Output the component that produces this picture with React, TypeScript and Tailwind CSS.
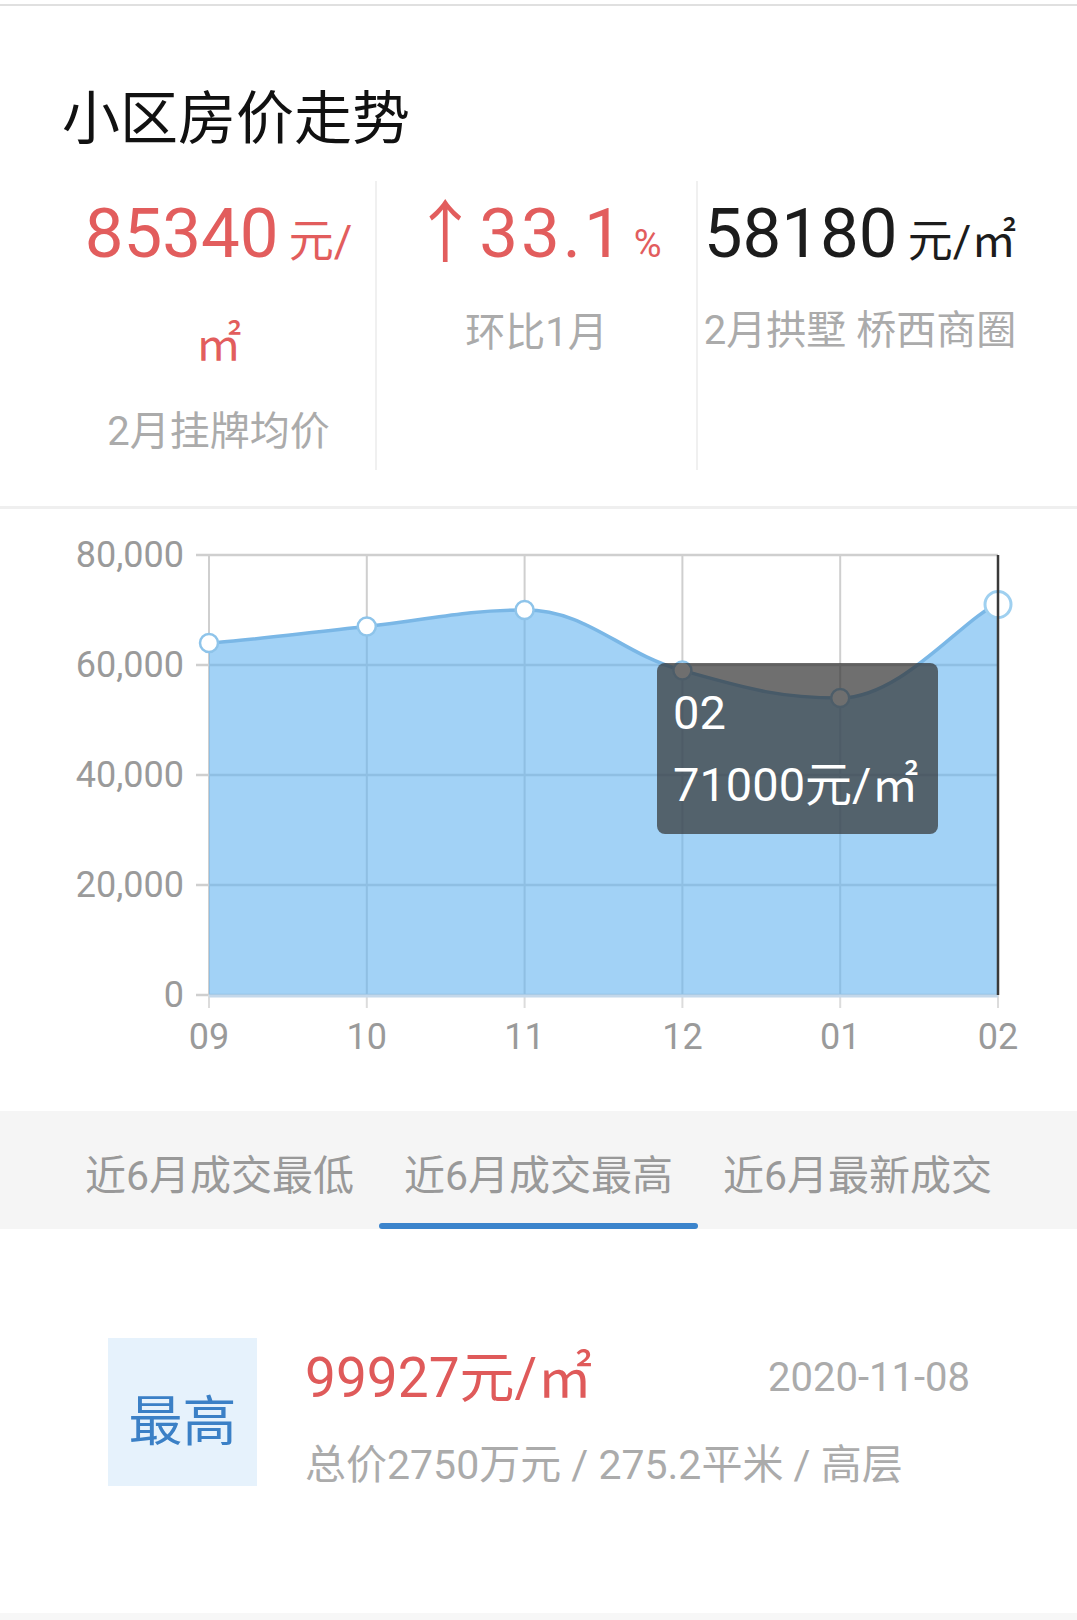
import React from "react";

type Pt = { x: number; y: number };

const X0 = 209;
const X1 = 998;
const YT = 555;
const YB = 995;
const months = ["09", "10", "11", "12", "01", "02"];
const values = [64000, 67000, 70000, 59000, 54000, 71000];
const yTicks = [80000, 60000, 40000, 20000, 0];

const xAt = (i: number) => X0 + ((X1 - X0) / 5) * i;
const yAt = (v: number) => YB - (v * (YB - YT)) / 80000;

function smoothPath(pts: Pt[], t = 0.2): string {
  let d = `M ${pts[0].x} ${pts[0].y}`;
  const tangent = (i: number): Pt => {
    const prev = pts[Math.max(0, i - 1)];
    const next = pts[Math.min(pts.length - 1, i + 1)];
    const cur = pts[i];
    let dy = (next.y - prev.y) * t;
    if ((cur.y - prev.y) * (cur.y - next.y) > 0) dy = 0;
    if (i === 0 || i === pts.length - 1) dy = 0.5 * dy;
    return { x: (next.x - prev.x) * t, y: dy };
  };
  for (let i = 0; i < pts.length - 1; i++) {
    const a = pts[i];
    const b = pts[i + 1];
    const ta = tangent(i);
    const tb = tangent(i + 1);
    d += ` C ${a.x + ta.x} ${a.y + ta.y} ${b.x - tb.x} ${b.y - tb.y} ${b.x} ${b.y}`;
  }
  return d;
}

function Chart() {
  const pts: Pt[] = values.map((v, i) => ({ x: xAt(i), y: yAt(v) }));
  const line = smoothPath(pts);
  const area = `${line} L ${X1} ${YB} L ${X0} ${YB} Z`;
  return (
    <div className="relative h-[602px]">
      <svg width={1077} height={602} viewBox="0 509 1077 602" className="block">
        {yTicks.map((v) => (
          <g key={v}>
            <line x1={196} x2={X1} y1={yAt(v)} y2={yAt(v)} stroke="#cfcfcf" strokeWidth={2.5} />
            <text
              x={184}
              y={yAt(v)}
              textAnchor="end"
              dominantBaseline="central"
              fontSize={36}
              fill="#9a9a9a"
            >
              {v === 0 ? "0" : v.toLocaleString("en-US")}
            </text>
          </g>
        ))}
        {months.map((m, i) => (
          <g key={m}>
            <line x1={xAt(i)} x2={xAt(i)} y1={YT} y2={YB} stroke="#cfcfcf" strokeWidth={2} />
            <line x1={xAt(i)} x2={xAt(i)} y1={YB} y2={YB + 13} stroke="#dcdcdc" strokeWidth={2} />
            <text
              x={xAt(i)}
              y={1037}
              textAnchor="middle"
              dominantBaseline="central"
              fontSize={36}
              fill="#9a9a9a"
            >
              {m}
            </text>
          </g>
        ))}
        <path d={area} fill="rgba(100,180,240,0.6)" />
        <line x1={X0} x2={X1} y1={YB + 1} y2={YB + 1} stroke="#c4d8ea" strokeWidth={3} />
        <path d={line} fill="none" stroke="#7ab7e6" strokeWidth={3.5} />
        {pts.map((p, i) =>
          i === pts.length - 1 ? (
            <circle key={i} cx={p.x} cy={p.y} r={13} fill="#ffffff" stroke="#9fd0f0" strokeWidth={3} />
          ) : (
            <circle key={i} cx={p.x} cy={p.y} r={9} fill="#ffffff" stroke="#8ec4ea" strokeWidth={2.5} />
          )
        )}
        <line x1={X1} x2={X1} y1={YT} y2={YB} stroke="#3a3a3a" strokeWidth={2.5} />
      </svg>
      <div className="absolute left-[657px] top-[154px] h-[171px] w-[281px] rounded-[8px] bg-[rgba(50,50,50,0.7)] pl-[16px] pt-[14px] text-[47px] leading-[72px] text-white">
        <div>02</div>
        <div className="whitespace-nowrap">71000元/㎡</div>
      </div>
    </div>
  );
}

export default function App() {
  return (
    <div className="flex h-[1620px] w-[1077px] flex-col overflow-hidden bg-white font-[Roboto,'Noto_Sans_CJK_SC',sans-serif]">
      <div className="mt-[4px] h-[2px] bg-[#e0e0e0]" />

      <div className="mt-[74px] pl-[62px] text-[58px] leading-[78px] text-[#111111]">小区房价走势</div>

      <div className="mt-[23px] flex h-[289px] pl-[62px]">
        <div className="flex w-[313px] flex-col items-center text-center">
          <div className="whitespace-nowrap text-[69px] leading-[106px] text-[#e25d5d]">
            85340<span className="ml-[10px] text-[45px]">元/</span>
          </div>
          <div className="text-[46px] leading-[98px] text-[#e25d5d]">㎡</div>
          <div className="text-[40px] leading-[78px] text-[#ababab]">2月挂牌均价</div>
        </div>
        <div className="flex w-[321px] flex-col items-center border-l-2 border-[#f0f0f0] text-center">
          <div className="whitespace-nowrap text-[69px] leading-[106px] text-[#e25d5d]">
            <span className="text-[68px]">↑</span>
            <span className="tracking-[3px]">33.1</span>
            <span className="ml-[8px] text-[38px]">%</span>
          </div>
          <div className="text-[40px] leading-[72px] text-[#ababab]">环比1月</div>
        </div>
        <div className="flex w-[326px] flex-col items-center border-l-2 border-[#f0f0f0] text-center">
          <div className="whitespace-nowrap text-[69px] leading-[106px] text-[#1c1c1c]">
            58180<span className="ml-[10px] text-[45px]">元/㎡</span>
          </div>
          <div className="whitespace-nowrap text-[40px] leading-[72px] text-[#ababab]">2月拱墅 桥西商圈</div>
        </div>
      </div>

      <div className="mt-[36px] h-[3px] bg-[#efefef]" />

      <Chart />

      <div className="grid h-[118px] grid-cols-3 bg-[#f5f5f5] px-[60px] text-[41px] text-[#999999]">
        <div className="flex flex-col items-center pt-[35px]">
          <div className="leading-[60px]">近6月成交最低</div>
        </div>
        <div className="flex flex-col items-center pt-[35px]">
          <div className="leading-[60px]">近6月成交最高</div>
          <div className="mt-[17px] h-[6px] w-full rounded-full bg-[#3b84cc]" />
        </div>
        <div className="flex flex-col items-center pt-[35px]">
          <div className="leading-[60px]">近6月最新成交</div>
        </div>
      </div>

      <div className="mt-[109px] flex pl-[108px] pr-[107px]">
        <div className="flex h-[148px] w-[149px] items-center justify-center bg-[#e6f2fc] pt-[20px] text-[54px] text-[#3b80c6]">
          最高
        </div>
        <div className="ml-[48px] flex-1">
          <div className="flex h-[80px] items-center justify-between">
            <span className="text-[55px] text-[#df5a5a]">99927元/㎡</span>
            <span className="text-[40px] text-[#ababab]">2020-11-08</span>
          </div>
          <div className="mt-[7px] whitespace-nowrap text-[41px] leading-[80px] text-[#ababab]">
            总价2750万元 / 275.2平米 / 高层
          </div>
        </div>
      </div>

      <div className="flex-1" />
      <div className="h-[7px] bg-[#f7f7f7]" />
    </div>
  );
}
